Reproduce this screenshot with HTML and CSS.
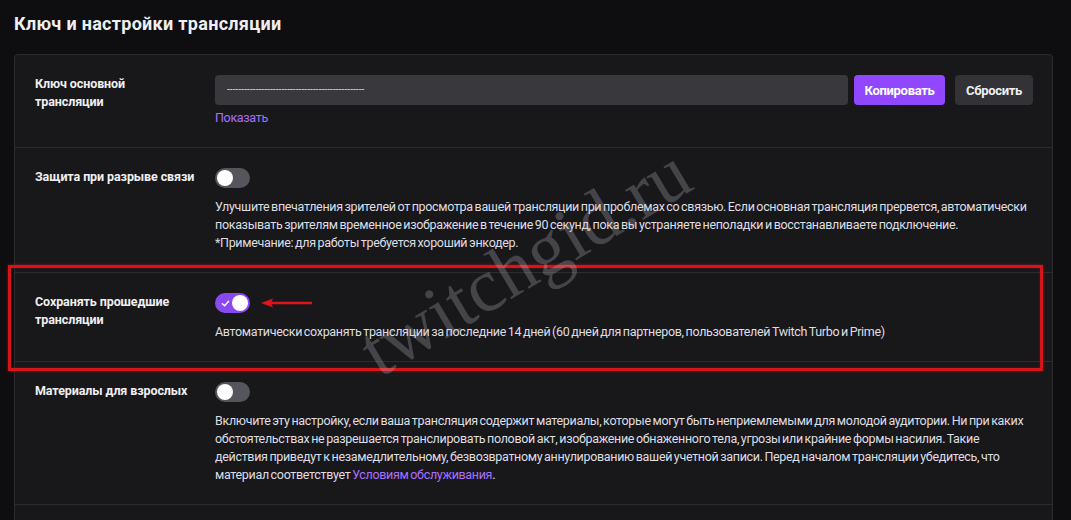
FILE: index.html
```html
<!DOCTYPE html>
<html lang="ru">
<head>
<meta charset="utf-8">
<link rel="stylesheet" href="styles.css">
</head>
<body>
<div class="page">
  <h1 class="title">Ключ и настройки трансляции</h1>
  <div class="card">
    <div class="row">
      <div class="label">Ключ основной трансляции</div>
      <div class="content">
        <div class="key-line">
          <div class="key-input">------------------------------------------------</div>
          <button class="btn btn-primary">Копировать</button>
          <button class="btn btn-secondary">Сбросить</button>
        </div>
        <a class="link show-link">Показать</a>
      </div>
    </div>
    <div class="row">
      <div class="label">Защита при разрыве связи</div>
      <div class="content">
        <div class="toggle"><span class="knob"></span></div>
        <p class="desc">Улучшите впечатления зрителей от просмотра вашей трансляции при проблемах со связью. Если основная трансляция прервется, автоматически показывать зрителям временное изображение в течение 90 секунд, пока вы устраняете неполадки и восстанавливаете подключение.<br>*Примечание: для работы требуется хороший энкодер.</p>
      </div>
    </div>
    <div class="row row-highlight">
      <div class="label">Сохранять прошедшие трансляции</div>
      <div class="content">
        <div class="toggle-wrap">
          <div class="toggle on">
            <svg class="check" viewBox="0 0 10 10" width="9" height="9"><path d="M1.5 5.2 L4 7.5 L8.5 2.5" fill="none" stroke="#fff" stroke-width="1.6" stroke-linecap="round" stroke-linejoin="round"/></svg>
            <span class="knob"></span>
          </div>
          <svg class="arrow" viewBox="0 0 56 12" width="56" height="12"><path d="M12 6 H52" stroke="#e0141a" stroke-width="2.4" stroke-linecap="round"/><path d="M2 6 L14 1.5 L12 6 L14 10.5 Z" fill="#e0141a"/></svg>
        </div>
        <p class="desc">Автоматически сохранять трансляции за последние 14 дней (60 дней для партнеров, пользователей Twitch Turbo и Prime)</p>
      </div>
      <div class="highlight-box"></div>
    </div>
    <div class="row">
      <div class="label">Материалы для взрослых</div>
      <div class="content">
        <div class="toggle"><span class="knob"></span></div>
        <p class="desc">Включите эту настройку, если ваша трансляция содержит материалы, которые могут быть неприемлемыми для молодой аудитории. Ни при каких обстоятельствах не разрешается транслировать половой акт, изображение обнаженного тела, угрозы или крайние формы насилия. Такие действия приведут к незамедлительному, безвозвратному аннулированию вашей учетной записи. Перед началом трансляции убедитесь, что материал соответствует <a class="link">Условиям обслуживания</a>.</p>
      </div>
    </div>
    <div class="row row-last"></div>
  </div>
  <div class="watermark">twitchgid.ru</div>
</div>
</body>
</html>
```

FILE: styles.css
```css
* { box-sizing: border-box; }
html, body { margin: 0; padding: 0; }
body {
  background: #0e0e10;
  color: #efeff1;
  font-family: Roboto, "Liberation Sans", Arial, sans-serif;
  font-size: 12.5px;
  letter-spacing: -0.32px;
  word-spacing: -1px;
  line-height: 18px;
  width: 1071px;
  height: 520px;
  overflow: hidden;
}
.page {
  position: relative;
  padding: 12px 18px 0 14px;
}
.title {
  margin: 0 0 18px;
  font-size: 18px;
  letter-spacing: 0.3px;
  word-spacing: 0;
  line-height: 24px;
  font-weight: 700;
  color: #efeff1;
}
.card {
  background: #18181b;
  border: 1px solid #2c2c30;
  border-radius: 4px 4px 0 0;
}
.row {
  display: flex;
  padding: 20px 19px 20px 20px;
  border-bottom: 1px solid #2c2c30;
}
.row-last { height: 40px; border-bottom: none; }
.label {
  width: 180px;
  flex: none;
  font-weight: 700;
  letter-spacing: -0.1px;
  word-spacing: 0;
  padding-right: 19px;
  color: #efeff1;
}
.content {
  flex: 1;
  min-width: 0;
}
.key-line {
  display: flex;
  align-items: center;
}
.key-input {
  flex: 1;
  height: 30px;
  background: #39393d;
  border-radius: 4px;
  color: #d8d8dc;
  font-size: 10px;
  letter-spacing: 0.1px;
  padding: 6px 12px;
  line-height: 17px;
  overflow: hidden;
  white-space: nowrap;
}
.btn {
  height: 30px;
  border: none;
  border-radius: 4px;
  font-family: inherit;
  font-size: 13px;
  letter-spacing: -0.3px;
  font-weight: 700;
  padding: 0 8px;
  color: #fff;
}
.btn-primary { background: #9147ff; margin-left: 6px; width: 91px; }
.btn-secondary { background: #323237; margin-left: 10px; width: 78px; color: #efeff1; }
.link { color: #a970ff; text-decoration: none; }
.show-link { display: block; margin-top: 4px; }
.desc {
  margin: 10px 0 0;
  color: #dedee3;
}
.toggle {
  position: relative;
  width: 35px;
  height: 20px;
  border-radius: 10px;
  background: #55555c;
}
.toggle .knob {
  position: absolute;
  top: 2px;
  left: 2px;
  width: 16px;
  height: 16px;
  border-radius: 50%;
  background: #fff;
}
.toggle.on { background: #8a48f0; }
.toggle.on .knob { left: auto; right: 2px; }
.toggle .check { position: absolute; left: 6px; top: 6px; }
.toggle-wrap { display: flex; align-items: center; }
.arrow { margin-left: 9px; }
.row-highlight { position: relative; }
.highlight-box {
  position: absolute;
  left: -7px;
  right: 9px;
  top: -8px;
  bottom: -10px;
  border: 3px solid #d4161b;
  box-shadow: 0 0 3px rgba(220, 20, 27, 0.6), inset 0 0 2px rgba(220, 20, 27, 0.5);
  pointer-events: none;
}
.watermark {
  position: absolute;
  left: 366px;
  top: 318px;
  font-family: "Liberation Serif", serif;
  font-size: 76px;
  letter-spacing: 0;
  word-spacing: 0;
  line-height: 76px;
  color: rgba(200, 200, 205, 0.26);
  transform: rotate(-31deg);
  transform-origin: left center;
  white-space: nowrap;
  pointer-events: none;
}
```
